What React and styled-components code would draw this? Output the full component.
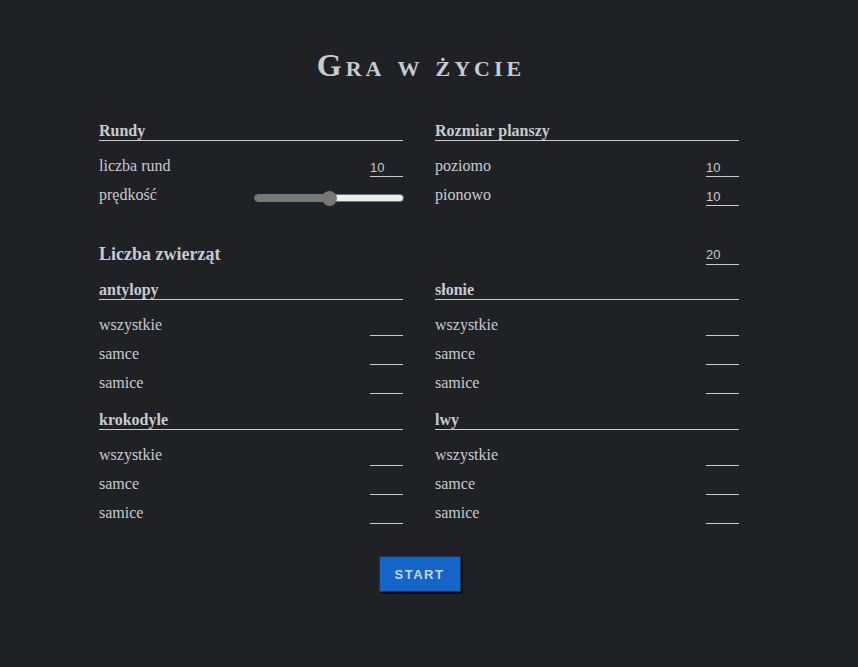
import React, { useState } from "react";
import styled, { createGlobalStyle } from "styled-components";

const GlobalStyle = createGlobalStyle`
    html, body {
        margin: 0;
        padding: 0;
        background: #202125;
    }
    body {
        color: #c7cbd0;
        font-family: "Liberation Serif", "Times New Roman", serif;
    }
`;

const animals = ["antylopy", "słonie", "krokodyle", "lwy"];
const sexes = ["wszystkie", "samce", "samice"];

const App = () => {
    const [speed, setSpeed] = useState(50);
    return (
        <>
            <GlobalStyle />
            <Page>
                <Main>
                    <Title>Gra w życie</Title>
                    <Columns>
                        <Group>
                            <GroupHeader>Rundy</GroupHeader>
                            <Row>
                                <Label>liczba rund</Label>
                                <NumberInput defaultValue="10" />
                            </Row>
                            <Row>
                                <Label>prędkość</Label>
                                <Slider
                                    type="range"
                                    min="0"
                                    max="100"
                                    value={speed}
                                    onChange={(e) => setSpeed(e.target.value)}
                                    style={{ "--fill": `${speed}%` }}
                                />
                            </Row>
                        </Group>
                        <Group>
                            <GroupHeader>Rozmiar planszy</GroupHeader>
                            <Row>
                                <Label>poziomo</Label>
                                <NumberInput defaultValue="10" />
                            </Row>
                            <Row>
                                <Label>pionowo</Label>
                                <NumberInput defaultValue="10" />
                            </Row>
                        </Group>
                    </Columns>

                    <TotalRow>
                        <TotalLabel>Liczba zwierząt</TotalLabel>
                        <NumberInput defaultValue="20" />
                    </TotalRow>

                    <AnimalGrid>
                        {animals.map((name) => (
                            <Group key={name}>
                                <GroupHeader>{name}</GroupHeader>
                                {sexes.map((s) => (
                                    <Row key={s}>
                                        <Label>{s}</Label>
                                        <NumberInput />
                                    </Row>
                                ))}
                            </Group>
                        ))}
                    </AnimalGrid>

                    <ButtonBar>
                        <StartButton>START</StartButton>
                    </ButtonBar>
                </Main>
            </Page>
        </>
    );
};

const Page = styled.div`
    min-height: 667px;
    padding-right: 20px;
`;

const Main = styled.main`
    width: 640px;
    margin: 0 auto;
    padding-top: 45px;
`;

const Title = styled.h1`
    margin: 0 0 37px;
    text-align: center;
    font-size: 32px;
    line-height: 40px;
    font-weight: bold;
    font-variant: small-caps;
    letter-spacing: 4px;
    text-indent: 4px;
`;

const Columns = styled.div`
    display: grid;
    grid-template-columns: 1fr 1fr;
    column-gap: 32px;
`;

const AnimalGrid = styled(Columns)`
    row-gap: 18px;
`;

const Group = styled.section`
    display: flex;
    flex-direction: column;
    gap: 9px;
`;

const GroupHeader = styled.h3`
    margin: 0 0 6px;
    font-size: 16px;
    line-height: 18px;
    font-weight: bold;
    border-bottom: 1px solid #c7cbd0;
`;

const Row = styled.div`
    display: flex;
    justify-content: space-between;
    align-items: flex-start;
    height: 20px;
`;

const Label = styled.span`
    font-size: 16px;
    line-height: 20px;
`;

const NumberInput = styled.input`
    box-sizing: border-box;
    width: 33px;
    height: 21px;
    padding: 2px 0 0;
    border: none;
    border-bottom: 1px solid #c7cbd0;
    background: transparent;
    color: #c7cbd0;
    font-family: "Liberation Sans", Arial, sans-serif;
    font-size: 13px;
    outline: none;
`;

const Slider = styled.input`
    -webkit-appearance: none;
    appearance: none;
    box-sizing: border-box;
    width: 150px;
    height: 8px;
    margin: 9px -1px 0 0;
    border-radius: 4px;
    background: linear-gradient(
        to right,
        #777 0%,
        #777 var(--fill),
        #eee var(--fill),
        #eee 100%
    );
    border: 1px solid #777;
    outline: none;
    &::-webkit-slider-thumb {
        -webkit-appearance: none;
        width: 15px;
        height: 15px;
        border-radius: 50%;
        background: #777;
        cursor: pointer;
    }
`;

const TotalRow = styled.div`
    display: flex;
    justify-content: space-between;
    align-items: center;
    margin: 38px 0 16px;
`;

const TotalLabel = styled.h2`
    margin: 0;
    font-size: 18px;
    line-height: 22px;
    font-weight: bold;
`;

const ButtonBar = styled.div`
    display: flex;
    justify-content: center;
    margin-top: 33px;
`;

const StartButton = styled.button`
    box-sizing: border-box;
    width: 82px;
    height: 36px;
    margin-left: 1px;
    background: #1565c8;
    border: 1px solid #22314c;
    box-shadow: 2px 2px 0 #0a0f1a;
    color: #c9d2de;
    font-family: "Liberation Sans", Arial, sans-serif;
    font-weight: bold;
    font-size: 13px;
    letter-spacing: 1.5px;
    cursor: pointer;
`;

export default App;
